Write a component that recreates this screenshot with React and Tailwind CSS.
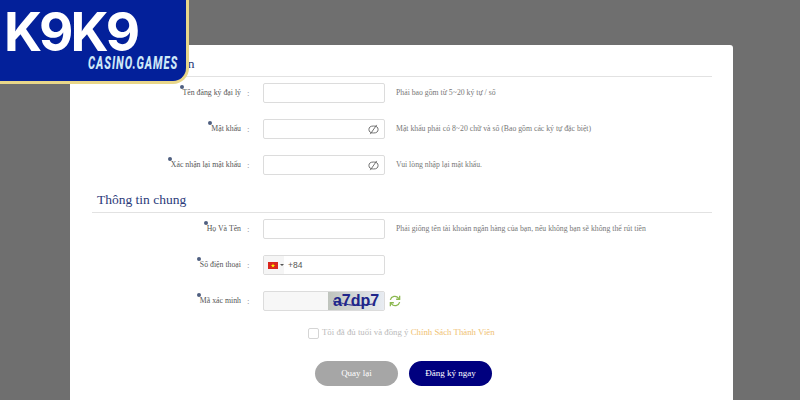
import React from "react";

const serif = "font-['Liberation_Serif',serif]";

function Label({ text }) {
  return (
    <div className="flex w-[193px] justify-end pr-[16px] text-[7.8px] leading-[10px] text-[#555] whitespace-nowrap">
      <span className="relative">
        <span className="absolute left-[-3px] top-[-3px] h-[4px] w-[4px] rounded-full bg-[#4f5f80]" />
        {text}
      </span>
      <span className="ml-[6px] w-0 text-[9px] text-[#888]">:</span>
    </div>
  );
}

function EyeOff() {
  return (
    <svg width="11" height="11" viewBox="0 0 12 12" fill="none" stroke="#666" strokeWidth="1" className="mr-[5px]">
      <ellipse cx="6" cy="6" rx="5" ry="3.8" />
      <path d="M9.5 1 2.5 11" />
    </svg>
  );
}

function Row({ label, hint, eye, children }) {
  return (
    <div className="flex h-[20px] items-center">
      <Label text={label} />
      {children || (
        <div className="flex h-[20px] w-[122px] items-center justify-end rounded-[2px] border border-[#dcdcdc] bg-white">
          {eye && <EyeOff />}
        </div>
      )}
      {hint && <p className="ml-[11px] text-[7.75px] text-[#777]">{hint}</p>}
    </div>
  );
}

function Heading({ children, wide }) {
  return (
    <div className="ml-[22px] mr-[21px] h-[23px] border-b border-[#e2e2e2] pl-[5px]">
      <h2 className={`text-[13.5px] leading-[20px] text-[#2b3a7a] ${wide ? "tracking-[0.35px]" : ""}`}>{children}</h2>
    </div>
  );
}

function Logo() {
  return (
    <div className="absolute left-0 top-0 h-[84px] w-[189px] rounded-br-[16px] border-b-[3px] border-r-[3px] border-[#e8d689] bg-[#03209a] font-['Inter',sans-serif]">
      <div className="pl-[4px] pt-[10px] text-[53px] font-bold leading-[44px] tracking-[-3px] text-white">K9K9</div>
      <div className="absolute left-[88px] top-[54px] origin-left scale-x-[0.62] whitespace-nowrap font-['Roboto',sans-serif] text-[18px] font-extrabold italic leading-[18px] tracking-[1.5px] text-[#cfe8f8]">
        CASINO.GAMES
      </div>
    </div>
  );
}

export default function App() {
  return (
    <div className={`relative h-[400px] w-[800px] overflow-hidden bg-[#6f6f6f] pt-[45px] ${serif}`}>
      <div className="ml-[70px] h-[355px] w-[663px] rounded-tr-[3px] bg-white pt-[9px]">
        <Heading wide>Thông tin cơ bản</Heading>

        <div className="mt-[6px] flex flex-col gap-[16px]">
          <Row label="Tên đăng ký đại lý" hint="Phải bao gồm từ 5~20 ký tự / số" />
          <Row label="Mật khẩu" eye hint="Mật khẩu phải có 8~20 chữ và số (Bao gồm các ký tự đặc biệt)" />
          <Row label="Xác nhận lại mật khẩu" eye hint="Vui lòng nhập lại mật khẩu." />
        </div>

        <div className="mt-[15px]">
          <Heading>Thông tin chung</Heading>
        </div>

        <div className="mt-[6px] flex flex-col gap-[16px]">
          <Row label="Họ Và Tên" hint="Phải giống tên tài khoản ngân hàng của bạn, nếu không bạn sẽ không thể rút tiền" />
          <Row label="Số điện thoại">
            <div className="flex h-[20px] w-[122px] items-center rounded-[2px] border border-[#dcdcdc] bg-white text-[8.5px] text-[#555]">
              <div className="flex h-full w-[20px] items-center gap-[2px] bg-[#f5f5f5] pl-[4px]">
                <svg width="10" height="7" viewBox="0 0 10 7">
                  <rect width="10" height="7" fill="#da251d" />
                  <path d="M5 1.2 5.5 2.9H7.2L5.8 3.9 6.3 5.6 5 4.5 3.7 5.6 4.2 3.9 2.8 2.9H4.5Z" fill="#ff0" />
                </svg>
                <span className="h-0 w-0 border-x-[2px] border-t-[2px] border-x-transparent border-t-[#555]" />
              </div>
              <span className="ml-[4px] font-['Liberation_Sans',sans-serif]">+84</span>
            </div>
          </Row>
          <Row label="Mã xác minh">
            <div className="flex h-[20px] w-[122px] rounded-[2px] border border-[#dcdcdc] bg-[#f7f7f7]">
              <div className="relative ml-auto flex h-full w-[56px] items-center justify-center bg-gradient-to-r from-[#bfc4bd] to-[#e8ecf2] font-['Liberation_Sans',sans-serif] text-[16px] font-bold leading-none text-[#20268a]">
                a7dp7
                <svg width="56" height="18" viewBox="0 0 56 18" fill="none" stroke="#20268a" strokeWidth="1" className="absolute left-0 top-0">
                  <path d="M5 9c6 1 10 3 18 4s14 0 22-1" />
                </svg>
              </div>
            </div>
            <svg width="14" height="14" viewBox="0 0 24 24" fill="none" stroke="#8bb84f" strokeWidth="2.2" className="ml-[3px]">
              <path d="M4 10a8 8 0 0 1 14-3l2 2" />
              <path d="M20 3v6h-6" />
              <path d="M20 14a8 8 0 0 1-14 3l-2-2" />
              <path d="M4 21v-6h6" />
            </svg>
          </Row>
        </div>

        <div className="mt-[16px] flex h-[12px] items-center pl-[238px] text-[8.8px] text-[#bbb]">
          <span className="mr-[3px] h-[11px] w-[11px] rounded-[2px] border border-[#d5d5d5]" />
          Tôi đã đủ tuổi và đồng ý&nbsp;
          <span className="text-[#f0c274]">Chính Sách Thành Viên</span>
        </div>

        <div className="mt-[22px] flex gap-[11px] pl-[245px] text-[9px] text-white">
          <button className="h-[25px] w-[83px] rounded-full bg-[#a6a6a6]">Quay lại</button>
          <button className="h-[25px] w-[83px] rounded-full bg-[#00007f]">Đăng ký ngay</button>
        </div>
      </div>

      <Logo />
    </div>
  );
}
